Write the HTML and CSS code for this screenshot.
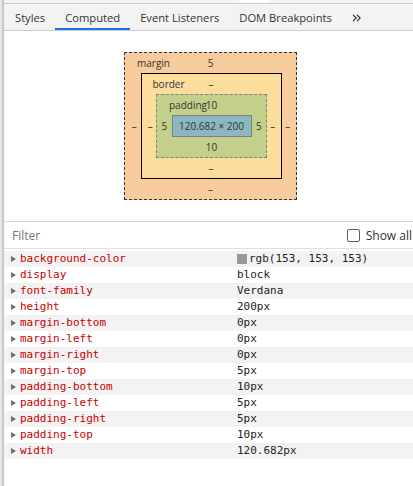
FILE: index.html
```html
<!DOCTYPE html>
<html lang="en">
<head>
<meta charset="utf-8">
<title>Computed</title>
<link rel="stylesheet" href="styles.css">
</head>
<body>
<div class="app">
  <div class="edge"></div>
  <div class="panel">
    <div class="topstrip"><span class="topmark"></span></div>
    <nav class="tabs">
      <span class="tab">Styles</span>
      <span class="tab active">Computed</span>
      <span class="tab">Event Listeners</span>
      <span class="tab">DOM Breakpoints</span>
      <span class="tab more"><svg width="9" height="8" viewBox="0 0 9 8"><path d="M1 0.8 L4.2 4 L1 7.2 M5 0.8 L8.2 4 L5 7.2" fill="none" stroke="#333" stroke-width="1.2"/></svg></span>
    </nav>

    <section class="boxarea">
      <div class="bm bm-margin">
        <div class="bm-top"><span class="bm-label">margin</span><span class="bm-val">5</span><span></span></div>
        <div class="bm-mid">
          <span class="side side-l">–</span>
          <div class="bm bm-border">
            <div class="bm-top"><span class="bm-label lb-border">border</span><span class="bm-val">–</span><span></span></div>
            <div class="bm-mid">
              <span class="side side-l">–</span>
              <div class="bm bm-padding">
                <div class="bm-top"><span class="bm-label">padding</span><span class="bm-val">10</span><span></span></div>
                <div class="bm-mid">
                  <span class="side side-c">5</span>
                  <div class="bm-content">120.682 × 200</div>
                  <span class="side side-c">5</span>
                </div>
                <div class="bm-bot">10</div>
              </div>
              <span class="side side-r">–</span>
            </div>
            <div class="bm-bot">–</div>
          </div>
          <span class="side side-r">–</span>
        </div>
        <div class="bm-bot">–</div>
      </div>
    </section>

    <div class="filterbar">
      <span class="filter">Filter</span>
      <label class="showall"><span class="checkbox"></span><span>Show all</span></label>
    </div>

    <div class="props">
      <div class="row"><span class="tri"></span><span class="name">background-color</span><span class="value"><span class="swatch"></span>rgb(153, 153, 153)</span></div>
      <div class="row"><span class="tri"></span><span class="name">display</span><span class="value">block</span></div>
      <div class="row"><span class="tri"></span><span class="name">font-family</span><span class="value">Verdana</span></div>
      <div class="row"><span class="tri"></span><span class="name">height</span><span class="value">200px</span></div>
      <div class="row"><span class="tri"></span><span class="name">margin-bottom</span><span class="value">0px</span></div>
      <div class="row"><span class="tri"></span><span class="name">margin-left</span><span class="value">0px</span></div>
      <div class="row"><span class="tri"></span><span class="name">margin-right</span><span class="value">0px</span></div>
      <div class="row"><span class="tri"></span><span class="name">margin-top</span><span class="value">5px</span></div>
      <div class="row"><span class="tri"></span><span class="name">padding-bottom</span><span class="value">10px</span></div>
      <div class="row"><span class="tri"></span><span class="name">padding-left</span><span class="value">5px</span></div>
      <div class="row"><span class="tri"></span><span class="name">padding-right</span><span class="value">5px</span></div>
      <div class="row"><span class="tri"></span><span class="name">padding-top</span><span class="value">10px</span></div>
      <div class="row"><span class="tri"></span><span class="name">width</span><span class="value">120.682px</span></div>
    </div>
  </div>
</div>
</body>
</html>
```

FILE: styles.css
```css
* { box-sizing: border-box; }
html, body { margin: 0; padding: 0; background: #fff; }
body {
  font-family: "Open Sans", "Noto Sans", sans-serif;
  color: #333;
  width: 413px;
  height: 486px;
  overflow: hidden;
}
.app {
  display: flex;
  height: 486px;
}
.edge {
  width: 4px;
  flex: none;
  background: linear-gradient(to right, #e6e6e6 0, #e6e6e6 2px, #c8c8c8 2px, #c8c8c8 4px);
}
.panel {
  flex: 1;
  min-width: 0;
  display: flex;
  flex-direction: column;
}
.topstrip {
  height: 3px;
  background: #f4f4f4;
  display: flex;
}
.topmark {
  width: 30px;
  margin-left: 235px;
  background: #fdfdfd;
}
.tabs {
  display: flex;
  height: 28px;
  background: #f3f3f3;
  border-top: 1px solid #cccccc;
  border-bottom: 1px solid #cccccc;
  padding-left: 1px;
  font-size: 11.2px;
}
.tab {
  display: flex;
  align-items: center;
  padding: 0 10px;
  color: #333;
  white-space: nowrap;
}
.tab.active {
  box-shadow: inset 0 -2px 0 #1a73e8;
}
.tab.more { padding-top: 1px; }

/* box model */
.boxarea {
  display: flex;
  justify-content: center;
  padding: 21px 0 21px 4px;
  border-bottom: 1px solid #d4d4d4;
  font-size: 10px;
  color: #333;
}
.bm { display: flex; flex-direction: column; }
.bm-margin {
  width: 173px;
  height: 148px;
  background: #f9cc9d;
  border: 1px dashed #333;
}
.bm-border {
  width: 141px;
  height: 106px;
  background: #fddd9b;
  border: 1px solid #000;
}
.bm-padding {
  width: 111px;
  height: 64px;
  background: #c3d08b;
  border: 1px dashed #808080;
}
.bm-top {
  height: 20px;
  display: grid;
  grid-template-columns: minmax(0, 1fr) auto minmax(0, 1fr);
  align-items: center;
  flex: none;
}
.bm-label {
  padding-left: 12px;
  white-space: nowrap;
}
.lb-border { padding-left: 11px; }
.bm-val { text-align: center; }
.bm-mid {
  display: flex;
  align-items: center;
  flex: 1;
}
.bm-bot {
  height: 20px;
  display: flex;
  align-items: center;
  justify-content: center;
  flex: none;
}
.side {
  flex: 1;
  text-align: center;
}
.side-l { padding-left: 3px; }
.side-r { padding-right: 2px; }
.bm-content {
  width: 80px;
  height: 22px;
  flex: none;
  background: #8cb6c0;
  border: 1px solid #808080;
  display: flex;
  align-items: center;
  justify-content: center;
  white-space: nowrap;
}

/* filter */
.filterbar {
  height: 27px;
  display: flex;
  align-items: center;
  border-bottom: 1px solid #e0e0e0;
  font-size: 12px;
}
.filter {
  padding-left: 8px;
  color: #757575;
}
.showall {
  margin-left: auto;
  display: flex;
  align-items: center;
  gap: 6px;
  color: #333;
  white-space: nowrap;
  padding-right: 1px;
}
.checkbox {
  width: 13px;
  height: 13px;
  border: 1px solid #5f5f5f;
  border-radius: 2px;
  background: #fff;
}

/* properties */
.props {
  padding-top: 2px;
  font-family: "DejaVu Sans Mono", "Liberation Mono", monospace;
  font-size: 11px;
}
.row {
  display: flex;
  align-items: center;
  height: 16px;
  line-height: 16px;
  padding-left: 7px;
}
.row:nth-child(odd) { background: #f3f3f3; }
.tri {
  width: 0;
  height: 0;
  border-left: 5px solid #6e6e6e;
  border-top: 3.5px solid transparent;
  border-bottom: 3.5px solid transparent;
  margin-right: 4px;
}
.name {
  width: 217px;
  color: #c80000;
  white-space: nowrap;
}
.value {
  color: #222;
  display: flex;
  align-items: center;
  white-space: nowrap;
}
.swatch {
  width: 10px;
  height: 10px;
  background: #999999;
  margin-right: 2px;
}
```
